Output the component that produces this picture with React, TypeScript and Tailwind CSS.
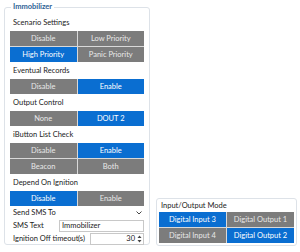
import React from 'react'

const font = { fontFamily: 'Lato, "Noto Sans", sans-serif' }

type Opt = { label: string; on?: boolean }

function ButtonGrid({ items }: { items: Opt[] }) {
  return (
    <div className="grid grid-cols-2 gap-[1px] bg-[#d9d9d9]">
      {items.map((it, i) => (
        <div
          key={i}
          className={`h-[15px] flex items-center justify-center text-[7.5px] leading-none ${
            it.on ? 'bg-[#0a6ed1] text-white' : 'bg-[#7c7c7c] text-[#e8e8e8]'
          }`}
        >
          {it.label}
        </div>
      ))}
    </div>
  )
}

function Label({ children }: { children: React.ReactNode }) {
  return <div className="h-[17px] flex items-center pl-[3px] text-[7.5px] text-[#222]">{children}</div>
}

export default function App() {
  return (
    <div className="w-[300px] h-[252px] bg-white flex gap-[6px] pl-[4px] pr-[3px]" style={font}>
      {/* Immobilizer */}
      <fieldset className="w-[146px] h-[243px] border border-[#dde2e8] rounded-[3px] px-[5px] pb-[4px] mt-[2px]">
        <legend className="ml-[1px] px-[2px] text-[7.5px] font-bold text-[#2c5f94] leading-[10px]">Immobilizer</legend>
        <div className="mt-[2px]" />
        <Label>Scenario Settings</Label>
        <ButtonGrid
          items={[
            { label: 'Disable' },
            { label: 'Low Priority' },
            { label: 'High Priority', on: true },
            { label: 'Panic Priority' },
          ]}
        />
        <Label>Eventual Records</Label>
        <ButtonGrid items={[{ label: 'Disable' }, { label: 'Enable', on: true }]} />
        <Label>Output Control</Label>
        <ButtonGrid items={[{ label: 'None' }, { label: 'DOUT 2', on: true }]} />
        <Label>iButton List Check</Label>
        <ButtonGrid
          items={[
            { label: 'Disable' },
            { label: 'Enable', on: true },
            { label: 'Beacon' },
            { label: 'Both' },
          ]}
        />
        <Label>Depend On Ignition</Label>
        <ButtonGrid items={[{ label: 'Disable', on: true }, { label: 'Enable' }]} />

        <div className="h-[13px] flex items-center text-[7.5px] text-[#222] pl-[3px]">
          <span className="w-[46px] shrink-0 whitespace-nowrap">Send SMS To</span>
          <div className="flex-1 h-[12px] flex items-center justify-end pr-[2px]">
            <svg width="6" height="4" viewBox="0 0 6 4" fill="none" stroke="#444" strokeWidth="1">
              <path d="M0.5 0.5 L3 3 L5.5 0.5" />
            </svg>
          </div>
        </div>
        <div className="h-[13px] flex items-center text-[7.5px] text-[#222] pl-[3px]">
          <span className="w-[46px] shrink-0">SMS Text</span>
          <div className="flex-1 h-[12px] border border-[#c8c8c8] flex items-center px-[2px]">Immobilizer</div>
        </div>
        <div className="h-[14px] flex items-center text-[7.5px] text-[#222] pl-[3px]">
          <span className="w-[65px] shrink-0 whitespace-nowrap">Ignition Off timeout</span>
          <span className="w-[12px] shrink-0 whitespace-nowrap">(s)</span>
          <div className="flex-1 h-[12px] border border-[#c8c8c8] flex items-center justify-end pr-[1px] gap-[2px]">
            <span>30</span>
            <svg width="5" height="8" viewBox="0 0 5 8" fill="#444">
              <path d="M2.5 0.5 L4.5 3 L0.5 3 Z" />
              <path d="M0.5 5 L4.5 5 L2.5 7.5 Z" />
            </svg>
          </div>
        </div>
      </fieldset>

      {/* Input/Output Mode */}
      <div className="self-end mb-[6px] w-[141px] border border-[#dde2e8] rounded-[3px] px-[2px] pb-[2px]">
        <div className="h-[13px] flex items-center pl-[2px] text-[7.5px] text-[#222]">Input/Output Mode</div>
        <ButtonGrid
          items={[
            { label: 'Digital Input 3', on: true },
            { label: 'Digital Output 1' },
            { label: 'Digital Input 4' },
            { label: 'Digital Output 2', on: true },
          ]}
        />
      </div>
    </div>
  )
}
